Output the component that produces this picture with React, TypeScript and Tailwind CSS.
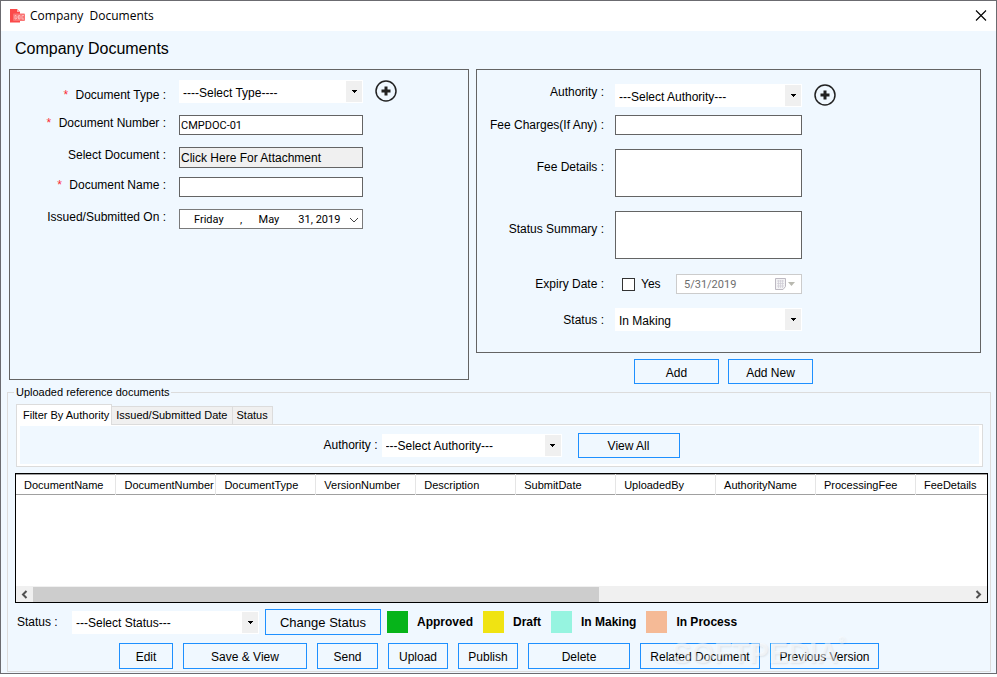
import { useState } from "react";
import type { ReactNode } from "react";

const columns = [
  "DocumentName",
  "DocumentNumber",
  "DocumentType",
  "VersionNumber",
  "Description",
  "SubmitDate",
  "UploadedBy",
  "AuthorityName",
  "ProcessingFee",
  "FeeDetails",
];

const legend = [
  { label: "Approved", color: "bg-[#06b41a]" },
  { label: "Draft", color: "bg-[#f0e312]" },
  { label: "In Making", color: "bg-[#96f4e0]" },
  { label: "In Process", color: "bg-[#f5ba96]" },
];

const actions = [
  { label: "Edit", width: "w-[54px]" },
  { label: "Save & View", width: "w-[124px]" },
  { label: "Send", width: "w-[61px]" },
  { label: "Upload", width: "w-[60px]" },
  { label: "Publish", width: "w-[60px]" },
  { label: "Delete", width: "w-[102px]" },
  { label: "Related Document", width: "w-[120px]" },
  { label: "Previous Version", width: "w-[109px]" },
];

const inputClass = "block border border-[#646464] bg-white px-px font-['Roboto',sans-serif] text-[11px] leading-4 outline-none";

function SelectBox({ id, options, className }: { id: string; options: string[]; className: string }) {
  return (
    <div className={`relative h-[23px] ${className}`}>
      <select id={id} className="block h-full w-full appearance-none bg-white pt-0.5 pl-1 text-xs outline-none">
        {options.map((o) => (
          <option key={o}>{o}</option>
        ))}
      </select>
      <span className="pointer-events-none absolute top-px right-px bottom-px flex w-4 items-center justify-center bg-[#f0f0f0]">
        <svg width="5" height="3" viewBox="0 0 5 3" shapeRendering="crispEdges">
          <path d="M0 0h5v1H0zM1 1h3v1H1zM2 2h1v1H2z" />
        </svg>
      </span>
    </div>
  );
}

function Button({ children, className }: { children: ReactNode; className: string }) {
  return (
    <button type="button" className={`border border-[#1e90ff] bg-[#f0f8ff] pt-0.5 whitespace-nowrap hover:bg-white ${className}`}>
      {children}
    </button>
  );
}

function PlusButton({ label }: { label: string }) {
  return (
    <button type="button" aria-label={label} className="ml-3 h-[23px]">
      <svg width="23" height="23" viewBox="0 0 23 23" fill="none" stroke="#222">
        <circle cx="11" cy="11" r="10" strokeWidth="1.5" />
        <path d="M11 6.500v9M6.500 11h9" strokeWidth="3" />
      </svg>
    </button>
  );
}

function LeftLabel({ htmlFor, required, children }: { htmlFor: string; required?: boolean; children: ReactNode }) {
  return (
    <label htmlFor={htmlFor} className="mr-[13px] w-[156px] text-right leading-4">
      {required && <span className="mr-1 text-red-500">*</span>} {children}
    </label>
  );
}

function RightLabel({ htmlFor, children }: { htmlFor: string; children: ReactNode }) {
  return (
    <label htmlFor={htmlFor} className="mr-[11px] w-[127px] text-right leading-4">
      {children}
    </label>
  );
}

export default function App() {
  const [docNumber, setDocNumber] = useState("CMPDOC-01");
  const [docName, setDocName] = useState("");
  const [hasExpiry, setHasExpiry] = useState(false);
  const [tab, setTab] = useState("Filter By Authority");

  return (
    <div className="border border-[#6b6b70] bg-[#f0f8ff] font-['Liberation_Sans',Arial,sans-serif] text-xs text-black">
      <header className="flex h-[30px] items-center bg-white pr-2 pl-2">
        <svg width="17" height="16" viewBox="0 0 17 16" className="mr-1">
          <path d="M1 1h7l3 3v10.500H1z" fill="#fb4a4a" />
          <path d="M8 1l3 3H8z" fill="#ffb3b3" />
          <rect x="4" y="5.500" width="12" height="7.500" rx="1" fill="#f97474" />
          <path d="M6 7.500v3.500h1l1-1V8.500l-1-1zM9.500 7.500h1.500V11H9.500zM15 7.500h-2V11h2" fill="none" stroke="#ffc4c4" strokeWidth="0.8" />
        </svg>
        <span className="font-['Open_Sans',sans-serif] whitespace-pre">Company  Documents</span>
        <button type="button" aria-label="Close" className="ml-auto">
          <svg width="14" height="14" viewBox="0 0 14 14" stroke="#000" strokeWidth="1.1">
            <path d="M2 1.500l10 10M12 1.500l-10 10" />
          </svg>
        </button>
      </header>

      <h1 className="pt-1.5 pb-2 pl-3.5 text-base">Company Documents</h1>

      <div className="grid grid-cols-[460fr_505fr] gap-[7px] pr-[15px] pl-2">
        <section className="mb-1 border border-[#646464] pt-2.5">
          <div className="flex items-end">
            <LeftLabel htmlFor="docType" required>Document Type :</LeftLabel>
            <SelectBox id="docType" options={["----Select Type----"]} className="w-[184px]" />
            <PlusButton label="Add document type" />
          </div>
          <div className="mt-3 flex items-start">
            <LeftLabel htmlFor="docNumber" required>Document Number :</LeftLabel>
            <input id="docNumber" value={docNumber} onChange={(e) => setDocNumber(e.target.value)} className={`${inputClass} h-5 w-[184px]`} />
          </div>
          <div className="mt-3 flex items-start">
            <LeftLabel htmlFor="attachment">Select Document :</LeftLabel>
            <button id="attachment" type="button" className="h-[21px] w-[184px] border border-[#646464] bg-[#f0f0f0] px-px text-left">
              Click Here For Attachment
            </button>
          </div>
          <div className="mt-[9px] flex items-start">
            <LeftLabel htmlFor="docName" required>Document Name :</LeftLabel>
            <input id="docName" value={docName} onChange={(e) => setDocName(e.target.value)} className={`${inputClass} h-5 w-[184px]`} />
          </div>
          <div className="mt-3 flex items-start">
            <LeftLabel htmlFor="issuedOn">Issued/Submitted On :</LeftLabel>
            <div className="relative">
              <input
                id="issuedOn"
                defaultValue="Friday      ,      May       31, 2019"
                className="block h-5 w-[184px] border border-[#7a7a7a] bg-white pl-3.5 font-['Roboto',sans-serif] text-[11px] outline-none"
              />
              <svg width="10" height="6" viewBox="0 0 10 6" fill="none" stroke="#444" className="pointer-events-none absolute top-2 right-1">
                <path d="M1 1l4 4 4-4" />
              </svg>
            </div>
          </div>
        </section>

        <div>
          <section className="border border-[#646464] pt-3.5 pb-[21px]">
            <div className="flex items-start">
              <RightLabel htmlFor="authority">Authority :</RightLabel>
              <SelectBox id="authority" options={["---Select Authority---"]} className="w-[187px]" />
              <PlusButton label="Add authority" />
            </div>
            <div className="mt-2 flex items-center">
              <RightLabel htmlFor="fee">Fee Charges(If Any) :</RightLabel>
              <input id="fee" className={`${inputClass} h-5 w-[187px]`} />
            </div>
            <div className="mt-3.5 flex items-start">
              <div className="flex pt-2.5"><RightLabel htmlFor="feeDetails">Fee Details :</RightLabel></div>
              <textarea id="feeDetails" className={`${inputClass} h-12 w-[187px] resize-none`} />
            </div>
            <div className="mt-3.5 flex items-start">
              <div className="flex pt-2.5"><RightLabel htmlFor="summary">Status Summary :</RightLabel></div>
              <textarea id="summary" className={`${inputClass} h-12 w-[187px] resize-none`} />
            </div>
            <div className="mt-[15px] flex items-center">
              <RightLabel htmlFor="expiry">Expiry Date :</RightLabel>
              <div className="flex w-[187px] items-center">
                <input
                  id="hasExpiry"
                  type="checkbox"
                  checked={hasExpiry}
                  onChange={(e) => setHasExpiry(e.target.checked)}
                  className="ml-[7px] size-[13px] appearance-none border border-[#333] bg-white checked:bg-[#1e90ff]"
                />
                <label htmlFor="hasExpiry" className="ml-1.5">Yes</label>
                <div className="relative ml-auto">
                  <input
                    id="expiry"
                    defaultValue="5/31/2019"
                    disabled={!hasExpiry}
                    className="block h-5 w-[126px] border border-[#ccc] bg-white pl-[7px] font-['Roboto',sans-serif] text-[11px] text-[#6d6d6d]"
                  />
                  <svg width="22" height="14" viewBox="0 0 22 14" className="pointer-events-none absolute top-[3px] right-1.5">
                    <path d="M1.500 1.500h10v8l-2.500 3H1.500z" fill="#f3f3f5" stroke="#bdb9c2" />
                    <path d="M3 4h7M3 6.500h7M3 9h7M4.500 3v8M6.500 3v8M8.500 3v8" stroke="#cfccd6" strokeWidth="0.7" />
                    <path d="M14 5h7l-3.500 4z" fill="#b9b9b0" />
                  </svg>
                </div>
              </div>
            </div>
            <div className="mt-3.5 flex items-center">
              <RightLabel htmlFor="status">Status :</RightLabel>
              <SelectBox id="status" options={["In Making", "Draft", "In Process", "Approved"]} className="w-[187px]" />
            </div>
          </section>
          <div className="flex gap-[9px] pt-1.5 pl-[158px]">
            <Button className="h-[25px] w-[85px]">Add</Button>
            <Button className="h-[25px] w-[85px]">Add New</Button>
          </div>
        </div>
      </div>

      <fieldset className="mr-[5px] mb-px ml-1.5 min-w-0 border border-[#dcdcdc] pb-0.5">
        <legend className="ml-1.5 px-0.5 text-[11px] leading-4">Uploaded reference documents</legend>

        <div className="mr-[7px] ml-2">
          <div role="tablist" className="relative -mb-px flex items-end pt-1 text-[11px]">
            {["Filter By Authority", "Issued/Submitted Date", "Status"].map((name) => (
              <button
                key={name}
                type="button"
                role="tab"
                aria-selected={tab === name}
                onClick={() => setTab(name)}
                className={
                  tab === name
                    ? "h-[21px] border border-b-0 border-[#dcdcdc] bg-white pr-0.5 pl-1.5"
                    : "h-[19px] border border-l-0 border-[#dcdcdc] bg-[#f0f0f0] px-1"
                }
              >
                {name}
              </button>
            ))}
          </div>
          <div role="tabpanel" className="border border-[#dcdcdc] bg-white px-[3px] pt-px pb-0.5">
            <div className="flex h-[38px] items-center justify-center bg-[#f0f8ff] pl-1">
              <label htmlFor="filterAuthority" className="mr-1">Authority :</label>
              <SelectBox id="filterAuthority" options={["---Select Authority---"]} className="w-[180px]" />
              <Button className="ml-4 h-[25px] w-[102px]">View All</Button>
            </div>
          </div>
        </div>

        <div className="mt-1.5 mr-0.5 ml-[7px] overflow-hidden border border-black bg-white">
          <div className="h-28 overflow-hidden">
            <table className="w-[1000px] table-fixed border-t border-[#a0a0a0]">
              <thead>
                <tr className="h-5 border-b border-[#a0a0a0]">
                  {columns.map((c) => (
                    <th key={c} className="border-r border-[#e5e5e5] pl-2 text-left text-[11px] leading-4 font-normal">
                      {c}
                    </th>
                  ))}
                </tr>
              </thead>
              <tbody />
            </table>
          </div>
          <div className="flex h-4 items-center bg-[#f0f0f0]">
            <svg width="17" height="15" viewBox="0 0 17 15" fill="none" stroke="#505050" strokeWidth="2">
              <path d="M10.500 4L7 7.500l3.500 3.500" />
            </svg>
            <div className="h-[15px] w-7/12 bg-[#cdcdcd]" />
            <svg width="17" height="15" viewBox="0 0 17 15" fill="none" stroke="#505050" strokeWidth="2" className="ml-auto">
              <path d="M6.500 4L10 7.500 6.500 11" />
            </svg>
          </div>
        </div>

        <div className="mt-1.5 flex items-center pl-[9px]">
          <label htmlFor="newStatus" className="w-[55px]">Status :</label>
          <SelectBox id="newStatus" options={["---Select Status---"]} className="w-[187px]" />
          <Button className="ml-1.5 h-[26px] w-[116px] text-[13px]">Change Status</Button>
          <ul className="ml-1.5 flex gap-2.5">
            {legend.map((item) => (
              <li key={item.label} className="flex items-center gap-[9px] font-bold">
                <span className={`h-[22px] w-[21px] ${item.color}`} />
                {item.label}
              </li>
            ))}
          </ul>
        </div>

        <div className="relative mt-2 flex gap-2.5 pl-[111px]">
          {actions.map((a) => (
            <Button key={a.label} className={`h-[26px] ${a.width}`}>{a.label}</Button>
          ))}
          <div className="pointer-events-none absolute -top-2 left-[664px] flex items-start font-bold text-white/50 select-none [text-shadow:1px_1px_2px_rgb(0_0_0/0.08)]">
            <span className="text-[29px] leading-9">SOFTPEDIA</span>
            <span className="text-[10px] leading-3">®</span>
          </div>
        </div>
      </fieldset>
    </div>
  );
}
